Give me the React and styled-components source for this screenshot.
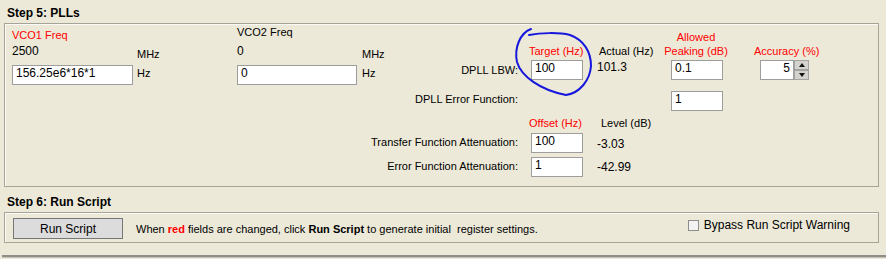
import React from 'react';
import styled, { createGlobalStyle } from 'styled-components';

const GlobalStyle = createGlobalStyle`
  body {
    margin: 0;
    background: #ece9d8;
    font-family: "Liberation Sans", Arial, sans-serif;
    color: #000;
  }
`;

const Page = styled.div`
  position: relative;
  width: 886px;
  height: 259px;
  box-sizing: border-box;
  padding: 6px 7px 0 4px;
  overflow: hidden;
`;

const StepTitle = styled.h2`
  margin: ${({ $top }) => $top}px 0 3px;
  padding-left: 3px;
  font-size: 12px;
  line-height: 14px;
  font-weight: 700;
`;

const Panel = styled.section`
  border: 1px solid #a6a499;
  box-shadow: inset 1px 1px 0 #fbfaf5;
  padding: ${({ $pad }) => $pad};
`;

const PllRow = styled.div`
  display: flex;
  align-items: flex-start;
`;

const VcoBlock = styled.div`
  width: ${({ $width }) => $width}px;
  display: grid;
  grid-template-columns: 125px auto;
  grid-template-rows: 15px 21px 20px;
`;

const VcoTitle = styled.div`
  grid-column: 1 / 3;
  margin-top: ${({ $raise }) => -$raise}px;
  font-size: 11px;
  line-height: 14px;
  color: ${({ $red }) => ($red ? '#f00' : '#000')};
`;

const Value = styled.div`
  font-size: 12px;
  line-height: 14px;
  margin-top: ${({ $top = 0 }) => $top}px;
  margin-left: ${({ $left = 0 }) => $left}px;
`;

const Unit = styled.div`
  font-size: 11px;
  line-height: 14px;
  margin-top: ${({ $top }) => $top}px;
`;

const Field = styled.input`
  width: ${({ $width }) => $width}px;
  height: 20px;
  box-sizing: border-box;
  margin: 0;
  padding: 0 3px 4px;
  border: 1px solid #9d9d9d;
  background: #fff;
  font-family: "Liberation Sans", Arial, sans-serif;
  font-size: 12px;
  line-height: 14px;
  color: #000;
  text-align: ${({ $align = 'left' }) => $align};
  outline: none;
`;

const DpllGrid = styled.div`
  display: grid;
  grid-template-columns: 164px 66px 74px 89px auto;
  grid-template-rows: 31px 29px 24px 20px 24px 20px;
  align-items: start;
`;

const RowLabel = styled.div`
  grid-column: 1;
  padding-right: 13px;
  text-align: right;
  font-size: 11px;
  line-height: 14px;
  margin-top: ${({ $top }) => $top}px;
`;

const Header = styled.div`
  align-self: ${({ $end }) => ($end ? 'end' : 'start')};
  margin: ${({ $top = 0 }) => $top}px 0 ${({ $end }) => ($end ? 2 : 0)}px
    ${({ $left = 0 }) => $left}px;
  width: ${({ $width }) => ($width ? `${$width}px` : 'auto')};
  text-align: ${({ $width }) => ($width ? 'center' : 'left')};
  font-size: 11px;
  line-height: 14px;
  white-space: nowrap;
  color: ${({ $red }) => ($red ? '#f00' : '#000')};
`;

const Cell = styled.div`
  grid-column: ${({ $col }) => $col};
`;

const SpinBox = styled.div`
  display: flex;
`;

const SpinButtons = styled.div`
  display: flex;
  flex-direction: column;
`;

const SpinButton = styled.button`
  width: 15px;
  height: 10px;
  margin: 0;
  padding: 0;
  box-sizing: border-box;
  border: 1px solid #a3a3a3;
  background: #d5d3cd;
  display: flex;
  align-items: center;
  justify-content: center;

  &::after {
    content: '';
    border-left: 3.5px solid transparent;
    border-right: 3.5px solid transparent;
    ${({ $down }) =>
      $down ? 'border-top: 4px solid #111;' : 'border-bottom: 4px solid #111;'}
  }
`;

const ScriptRow = styled.div`
  display: flex;
  align-items: center;
`;

const RunButton = styled.button`
  width: 110px;
  height: 21px;
  margin: 0;
  padding: 0;
  border: 1px solid #777;
  background: #dcdcdc;
  font-family: "Liberation Sans", Arial, sans-serif;
  font-size: 12px;
  color: #000;
`;

const Hint = styled.p`
  margin: 0 0 0 13px;
  font-size: 11px;
  line-height: 14px;
  white-space: pre;

  em {
    font-style: normal;
    font-weight: 700;
    color: ${({ $accent }) => $accent};
  }
  strong {
    font-weight: 700;
  }
`;

const CheckLabel = styled.label`
  align-self: flex-start;
  margin: 0 28px 0 auto;
  display: flex;
  gap: 5px;
  font-size: 12px;
  line-height: 14px;
`;

const CheckBox = styled.input`
  appearance: none;
  width: 11px;
  height: 11px;
  margin: 2px 0 0;
  border: 1px solid #8d8d8d;
  background: #f3f3f3;
`;

const Divider = styled.div`
  margin: 12px -7px 0 -2px;
  border-top: 2px solid #8e8d88;
  border-bottom: 1px solid #c9c6b9;
`;

const Annotation = styled.svg`
  position: absolute;
  left: 0;
  top: 0;
  pointer-events: none;
`;

const Vco = ({ title, red, raise, width, value, input, inputWidth }) => (
  <VcoBlock $width={width}>
    <VcoTitle $red={red} $raise={raise}>{title}</VcoTitle>
    <Value>{value}</Value>
    <Unit $top={3}>MHz</Unit>
    <Field $width={inputWidth} defaultValue={input} />
    <Unit $top={1}>Hz</Unit>
  </VcoBlock>
);

const App = () => (
  <Page>
    <GlobalStyle />
    <StepTitle $top={0}>Step 5: PLLs</StepTitle>
    <Panel $pad="5px 0 9px 7px">
      <PllRow>
        <Vco title="VCO1 Freq" red raise={1} width={225} value="2500" input="156.25e6*16*1" inputWidth={121} />
        <Vco title="VCO2 Freq" raise={4} width={130} value="0" input="0" inputWidth={120} />
        <DpllGrid>
          <Cell $col={1} />
          <Header $end $red $left={-2}>Target (Hz)</Header>
          <Header $end $left={2}>Actual (Hz)</Header>
          <Header $end $red $left={-7} $width={64}>
            Allowed
            <br />
            Peaking (dB)
          </Header>
          <Header $end $red $left={-6}>Accuracy (%)</Header>

          <RowLabel $top={3}>DPLL LBW:</RowLabel>
          <Field $width={52} defaultValue="100" />
          <Value>101.3</Value>
          <Field $width={52} defaultValue="0.1" />
          <SpinBox>
            <Field $width={34} $align="right" defaultValue="5" />
            <SpinButtons>
              <SpinButton aria-label="up" />
              <SpinButton $down aria-label="down" />
            </SpinButtons>
          </SpinBox>

          <RowLabel $top={3}>DPLL Error Function:</RowLabel>
          <Cell $col={4}>
            <Field $width={52} defaultValue="1" />
          </Cell>

          <Cell $col={1} />
          <Header $red $top={3} $left={-2}>Offset (Hz)</Header>
          <Header $top={3} $left={4}>Level (dB)</Header>

          <RowLabel $top={2}>Transfer Function Attenuation:</RowLabel>
          <Field $width={52} defaultValue="100" />
          <Value $top={4}>-3.03</Value>

          <RowLabel $top={2}>Error Function Attenuation:</RowLabel>
          <Field $width={52} defaultValue="1" />
          <Value $top={3}>-42.99</Value>
        </DpllGrid>
      </PllRow>
    </Panel>

    <StepTitle $top={8}>Step 6: Run Script</StepTitle>
    <Panel $pad="5px 0 3px 8px">
      <ScriptRow>
        <RunButton>Run Script</RunButton>
        <Hint $accent="#f00">
          When <em>red</em> fields are changed, click <strong>Run Script</strong> to generate initial  register settings.
        </Hint>
        <CheckLabel>
          <CheckBox type="checkbox" />
          Bypass Run Script Warning
        </CheckLabel>
      </ScriptRow>
    </Panel>
    <Divider />

    <Annotation width="886" height="259" viewBox="0 0 886 259">
      <path
        d="M531 29 C520 33, 514 48, 517 62 C521 76, 540 90, 566 95 C580 93, 590 80, 591 66 C591 52, 584 40, 570 35 C558 32, 540 33, 529 35"
        fill="none"
        stroke="#1616dc"
        strokeWidth="2"
        strokeLinecap="round"
      />
    </Annotation>
  </Page>
);

export default App;
